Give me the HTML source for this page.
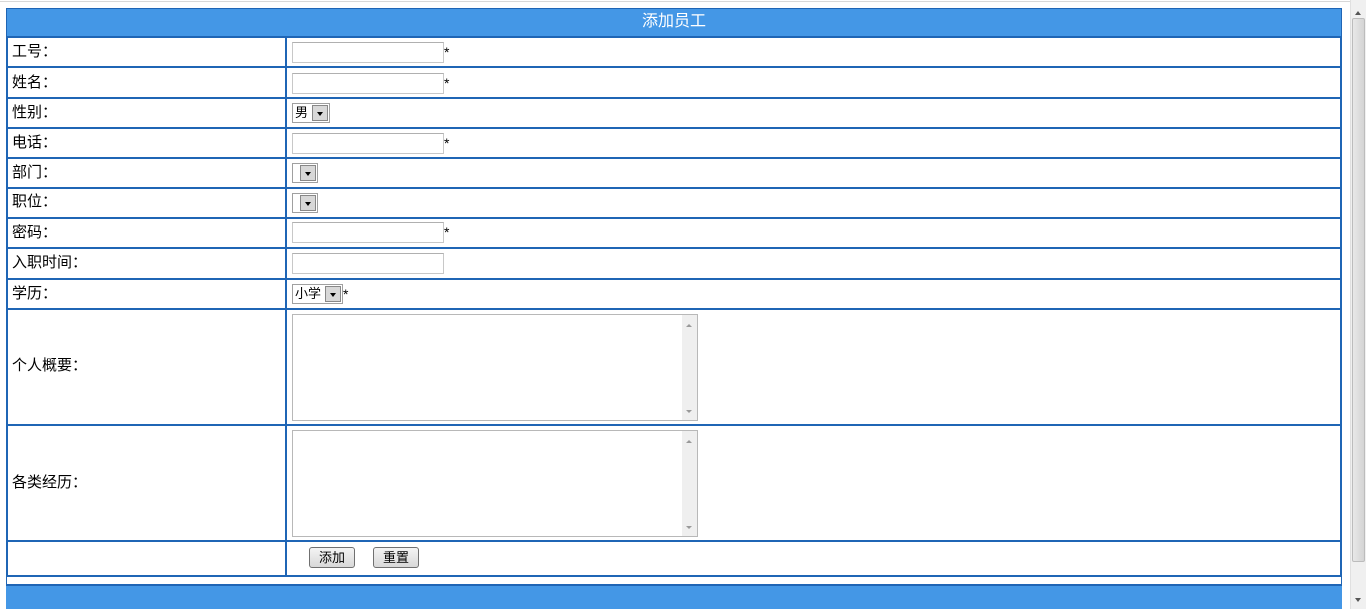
<!DOCTYPE html>
<html><head><meta charset="utf-8"><style>
*{margin:0;padding:0;box-sizing:border-box}
body{width:1366px;height:609px;overflow:hidden;background:#fff;position:relative;font-family:"Liberation Sans","Noto Sans CJK SC",sans-serif;font-size:14px;color:#000}
.a{position:absolute}
.h{position:absolute;left:6px;width:1336px;height:2px;background:#1f65b5}
.v{position:absolute;width:2px;background:#1f65b5}
.lbl{position:absolute;left:12px;font-size:15px;line-height:18px}
.inp{position:absolute;left:292px;width:152px;height:21px;border:1px solid #c8c8c8;border-top-color:#b0b0b0;background:#fff}
.star{position:absolute;font-size:14px}
.sel{position:absolute;left:292px;height:20px;border:1px solid #a0a0a0;background:#fff;font-size:13px;line-height:18px;padding-left:2px}
.sel b{position:absolute;right:1px;top:1px;width:16px;height:16px;background:#d8d8d8;border:1px solid #888}
.sel b:after{content:"";position:absolute;left:4px;top:6px;border:3.5px solid transparent;border-top:4px solid #000}
.ta{position:absolute;left:292px;width:406px;height:107px;border:1px solid #b8b8b8;background:#fff}
.ta i{position:absolute;right:0;top:0;width:15px;height:100%;background:#efefef}
.ta i:before{content:"";position:absolute;left:4px;top:6px;border:3px solid transparent;border-bottom:3px solid #999}
.ta i:after{content:"";position:absolute;left:4px;bottom:4px;border:3px solid transparent;border-top:3px solid #999}
.btn{position:absolute;top:547px;height:21px;border:1px solid #707070;border-radius:3px;background:linear-gradient(#f4f4f4,#d8d8d8);font-size:13px;line-height:19px;text-align:center}
</style></head><body>
<div class="a" style="left:0;top:1px;width:1350px;height:1px;background:#d8d8d8"></div>
<div class="a" style="left:6px;top:8px;width:1336px;height:29px;background:#4497e6;border:1px solid #1f65b5;border-bottom:none"></div>
<div class="a" style="left:6px;top:12px;width:1336px;text-align:center;color:#fff;font-size:16px;line-height:20px">添加员工</div>
<div class="h" style="top:36px"></div><div class="h" style="top:66px"></div><div class="h" style="top:97px"></div><div class="h" style="top:127px"></div><div class="h" style="top:157px"></div><div class="h" style="top:187px"></div><div class="h" style="top:217px"></div><div class="h" style="top:247px"></div><div class="h" style="top:278px"></div><div class="h" style="top:308px"></div><div class="h" style="top:424px"></div><div class="h" style="top:540px"></div><div class="h" style="top:575px"></div>
<div class="v" style="left:6px;top:36px;height:541px"></div>
<div class="v" style="left:285px;top:36px;height:541px"></div>
<div class="v" style="left:1340px;top:36px;height:541px"></div>
<div class="a" style="left:6px;top:577px;width:1px;height:8px;background:#1f65b5"></div>
<div class="a" style="left:1341px;top:577px;width:1px;height:8px;background:#1f65b5"></div>
<div class="a" style="left:6px;top:584px;width:1336px;height:25px;background:#4497e6;border-top:2px solid #1f65b5"></div>

<div class="lbl" style="top:43px">工号：</div>
<div class="lbl" style="top:74px">姓名：</div>
<div class="lbl" style="top:104px">性别：</div>
<div class="lbl" style="top:134px">电话：</div>
<div class="lbl" style="top:164px">部门：</div>
<div class="lbl" style="top:193px">职位：</div>
<div class="lbl" style="top:224px">密码：</div>
<div class="lbl" style="top:254px">入职时间：</div>
<div class="lbl" style="top:285px">学历：</div>
<div class="lbl" style="top:357px">个人概要：</div>
<div class="lbl" style="top:474px">各类经历：</div>

<div class="inp" style="top:42px"></div><div class="star" style="left:444px;top:44px">*</div>
<div class="inp" style="top:73px"></div><div class="star" style="left:444px;top:75px">*</div>
<div class="sel" style="top:103px;width:38px">男<b></b></div>
<div class="inp" style="top:133px"></div><div class="star" style="left:444px;top:135px">*</div>
<div class="sel" style="top:163px;width:26px"><b></b></div>
<div class="sel" style="top:193px;width:26px"><b></b></div>
<div class="inp" style="top:222px"></div><div class="star" style="left:444px;top:224px">*</div>
<div class="inp" style="top:253px"></div>
<div class="sel" style="top:284px;width:51px">小学<b></b></div><div class="star" style="left:343px;top:286px">*</div>
<div class="ta" style="top:314px"><i></i></div>
<div class="ta" style="top:430px"><i></i></div>
<div class="btn" style="left:309px;width:46px">添加</div>
<div class="btn" style="left:373px;width:46px">重置</div>

<div class="a" style="left:1350px;top:0;width:16px;height:609px;background:#f0f0f0;border-left:1px solid #e0e0e0"></div>
<div class="a" style="left:1352px;top:18px;width:13px;height:544px;background:linear-gradient(90deg,#e8e8e8,#d4d4d4);border:1px solid #bcbcbc;border-radius:2px"></div>
<div class="a" style="left:1355px;top:8px;border:3px solid transparent;border-bottom:4px solid #555"></div>
<div class="a" style="left:1355px;top:598px;border:3px solid transparent;border-top:4px solid #555"></div>
</body></html>
